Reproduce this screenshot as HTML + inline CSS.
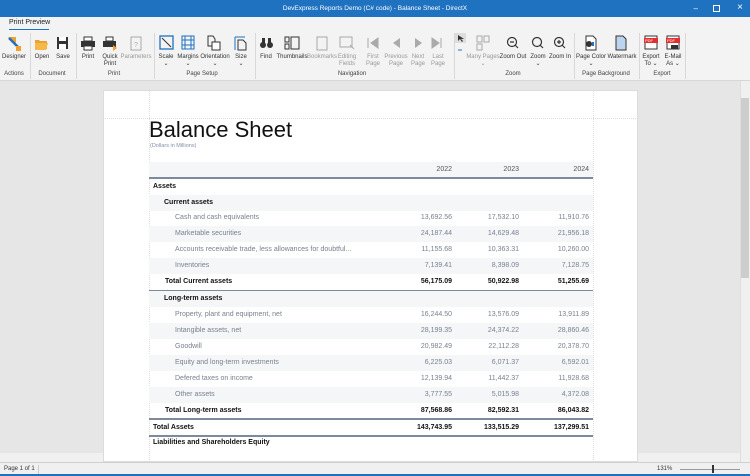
<!DOCTYPE html>
<html><head><meta charset="utf-8"><style>
*{margin:0;padding:0;box-sizing:border-box}
body{width:750px;height:476px;overflow:hidden;background:#e6e6e6;font-family:"Liberation Sans",Arial,sans-serif;position:relative}
.a{position:absolute}
#title{left:0;top:0;width:750px;height:17px;background:#1e72c0;color:#fff;font-size:6.5px;text-align:center;line-height:17px}
#tabs{left:0;top:17px;width:750px;height:13px;background:#f3f3f3}
#rib{left:0;top:30px;width:750px;height:51px;background:#f3f3f3;border-bottom:1px solid #d6d6d6}
.lb{font-size:6px;color:#333;text-align:center;width:40px;line-height:7px}
.gl{font-size:6px;color:#444;text-align:center;width:80px}
.sep{width:1px;height:46px;top:33px;background:#d8d8d8}
.dis{color:#999}
#page{left:103px;top:90px;width:535px;height:372px;background:#fff;border:1px solid #dcdcdc}
.row{position:absolute;left:149px;width:444px;height:16px;font-size:7px;line-height:16px;color:#7a8090}
.row.g{background:#f5f6f8}
.row span{position:absolute}
.n1{right:141px;text-align:right}.n2{right:74px}.n3{right:4px}
.b{color:#111;font-weight:bold}
.h{color:#555}
.ln{position:absolute;left:149px;width:444px;height:2px;background:#7d8a9c}
#status{left:0;top:462px;width:750px;height:14px;background:#f0f0f0;border-top:1px solid #d0d0d0;font-size:6px;color:#333;line-height:13px;border-bottom:2px solid #1e72c0}
</style></head><body>
<div class="a" id="title">DevExpress Reports Demo (C# code) - Balance Sheet - DirectX</div>
<div class="a" style="right:52px;top:4px;color:#fff;font-size:8px">&#8211;</div>
<div class="a" style="right:30px;top:5px;width:7px;height:7px;border:1px solid #fff"></div>
<div class="a" style="right:7px;top:2px;color:#fff;font-size:10px">&#215;</div>
<div class="a" id="tabs"><div class="a" style="left:9px;top:2px;font-size:7px;color:#222">Print Preview</div><div class="a" style="left:9px;top:12px;width:40px;height:1px;background:#1e72c0"></div></div>
<div class="a" id="rib"></div>
<svg class="a" style="left:0;top:33px" width="750" height="22" viewBox="0 33 750 22">
<path d="M8 37h8v8z" fill="#f0a030"/><path d="M9 38l10 10" stroke="#1e72c0" stroke-width="2.5"/><path d="M16 46h5v5h-5z" fill="#f0a030"/>
<path d="M35 40h4l1 1h7v8H35z" fill="#f0a030"/><path d="M35 43h13l-2 7H35z" fill="#f7b84a"/>
<rect x="57" y="37" width="11" height="12" fill="#333"/><rect x="59" y="37" width="7" height="4" fill="#fff"/><rect x="59" y="44" width="7" height="5" fill="#fff"/>
<rect x="81" y="41" width="14" height="6" fill="#333"/><rect x="84" y="37" width="8" height="4" fill="#fff" stroke="#333"/><rect x="84" y="46" width="8" height="4" fill="#fff" stroke="#333"/>
<rect x="103" y="41" width="13" height="6" fill="#333"/><rect x="106" y="37" width="7" height="4" fill="#fff" stroke="#333"/><path d="M113 45l4 3-4 3z" fill="#f0a030"/>
<rect x="131" y="37" width="10" height="13" fill="none" stroke="#aaa"/><text x="134" y="47" font-size="7" fill="#aaa" font-family="Liberation Sans">?</text>
<rect x="160" y="36" width="13" height="13" fill="none" stroke="#1e72c0" stroke-width="1.3"/><path d="M162 38l9 9" stroke="#333"/>
<rect x="182" y="36" width="12" height="13" fill="none" stroke="#1e72c0"/><path d="M185 36v13M191 36v13M182 40h12M182 45h12" stroke="#1e72c0"/>
<path d="M208 36h5l2 3v7h-7z" fill="none" stroke="#333"/><path d="M212 42h8v8h-8z" fill="#fff" stroke="#333"/>
<path d="M235 37h10M235 37v13" stroke="#1e72c0"/><path d="M238 40h5l3 3v7h-8z" fill="none" stroke="#333"/>
<circle cx="263" cy="45" r="3" fill="#333"/><circle cx="270" cy="45" r="3" fill="#333"/><rect x="262" y="38" width="3" height="6" fill="#333"/><rect x="268" y="38" width="3" height="6" fill="#333"/>
<rect x="285" y="37" width="4" height="5" fill="none" stroke="#333"/><rect x="285" y="44" width="4" height="5" fill="none" stroke="#333"/><rect x="291" y="37" width="8" height="12" fill="none" stroke="#333"/>
<rect x="317" y="37" width="10" height="13" fill="none" stroke="#aaa"/><rect x="340" y="37" width="12" height="10" fill="none" stroke="#aaa"/><path d="M350 45l4 4" stroke="#aaa"/>
<path d="M368 38v10M378 38l-7 5 7 5z" fill="#aaa" stroke="#aaa"/><path d="M400 38l-7 5 7 5z" fill="#aaa"/><path d="M415 38l7 5-7 5z" fill="#aaa"/><path d="M432 38l7 5-7 5zM441 38v10" fill="#aaa" stroke="#aaa"/>
<rect x="455" y="33" width="11" height="10" fill="#ddd"/><path d="M458 35v6l2-2 2 3 1-1-2-2h3z" fill="#333"/>
<rect x="477" y="36" width="5" height="6" fill="none" stroke="#aaa"/><rect x="484" y="36" width="5" height="6" fill="none" stroke="#aaa"/><rect x="477" y="44" width="5" height="6" fill="none" stroke="#aaa"/>
<circle cx="512" cy="42" r="4.5" fill="none" stroke="#333" stroke-width="1.2"/><path d="M515 45l3 3M510 42h4" stroke="#333" stroke-width="1.2"/>
<circle cx="537" cy="42" r="4.5" fill="none" stroke="#333" stroke-width="1.2"/><path d="M540 45l3 3" stroke="#333" stroke-width="1.2"/>
<circle cx="559" cy="42" r="4.5" fill="none" stroke="#333" stroke-width="1.2"/><path d="M562 45l3 3M557 42h4M559 40v4" stroke="#333" stroke-width="1.2"/>
<path d="M586 36h7l3 3v11h-10z" fill="#fff" stroke="#333"/><circle cx="589" cy="44" r="3" fill="#333"/><path d="M593 42v4" stroke="#1e72c0" stroke-width="2"/>
<path d="M616 36h7l3 3v11h-10z" fill="#bcd4ee" stroke="#333"/>
<rect x="645" y="36" width="12" height="13" fill="#fff" stroke="#333"/><rect x="644" y="38" width="14" height="5" fill="#e03030"/><text x="645" y="42" font-size="4" fill="#fff" font-family="Liberation Sans">PDF</text>
<rect x="667" y="36" width="12" height="13" fill="#fff" stroke="#333"/><rect x="666" y="38" width="14" height="5" fill="#e03030"/><text x="667" y="42" font-size="4" fill="#fff" font-family="Liberation Sans">PDF</text><rect x="671" y="45" width="7" height="4" fill="#333"/>
<path d="M458 50h4" stroke="#1e72c0"/>
</svg>
<div class="a sep" style="left:30px"></div><div class="a sep" style="left:76px"></div><div class="a sep" style="left:154px"></div><div class="a sep" style="left:255px"></div><div class="a sep" style="left:454px"></div><div class="a sep" style="left:574px"></div><div class="a sep" style="left:639px"></div><div class="a sep" style="left:685px"></div>
<div class="a lb" style="left:-6px;top:54px">Designer</div>
<div class="a lb" style="left:22px;top:54px">Open</div>
<div class="a lb" style="left:43px;top:54px">Save</div>
<div class="a lb" style="left:68px;top:54px">Print</div>
<div class="a lb" style="left:90px;top:54px">Quick<br>Print</div>
<div class="a lb dis" style="left:116px;top:54px">Parameters</div>
<div class="a lb" style="left:146px;top:54px">Scale<br>⌄</div>
<div class="a lb" style="left:168px;top:54px">Margins<br>⌄</div>
<div class="a lb" style="left:195px;top:54px">Orientation<br>⌄</div>
<div class="a lb" style="left:221px;top:54px">Size<br>⌄</div>
<div class="a lb" style="left:246px;top:54px">Find</div>
<div class="a lb" style="left:272px;top:54px">Thumbnails</div>
<div class="a lb dis" style="left:302px;top:54px">Bookmarks</div>
<div class="a lb dis" style="left:327px;top:54px">Editing<br>Fields</div>
<div class="a lb dis" style="left:353px;top:54px">First<br>Page</div>
<div class="a lb dis" style="left:376px;top:54px">Previous<br>Page</div>
<div class="a lb dis" style="left:398px;top:54px">Next<br>Page</div>
<div class="a lb dis" style="left:418px;top:54px">Last<br>Page</div>
<div class="a lb dis" style="left:463px;top:54px">Many Pages<br>⌄</div>
<div class="a lb" style="left:493px;top:54px">Zoom Out</div>
<div class="a lb" style="left:518px;top:54px">Zoom<br>⌄</div>
<div class="a lb" style="left:540px;top:54px">Zoom In</div>
<div class="a lb" style="left:571px;top:54px">Page Color<br>⌄</div>
<div class="a lb" style="left:602px;top:54px">Watermark</div>
<div class="a lb" style="left:631px;top:54px">Export<br>To ⌄</div>
<div class="a lb" style="left:653px;top:54px">E-Mail<br>As ⌄</div>
<div class="a gl" style="left:-26px;top:71px">Actions</div>
<div class="a gl" style="left:12px;top:71px">Document</div>
<div class="a gl" style="left:74px;top:71px">Print</div>
<div class="a gl" style="left:162px;top:71px">Page Setup</div>
<div class="a gl" style="left:312px;top:71px">Navigation</div>
<div class="a gl" style="left:473px;top:71px">Zoom</div>
<div class="a gl" style="left:566px;top:71px">Page Background</div>
<div class="a gl" style="left:622px;top:71px">Export</div>
<div class="a" style="left:740px;top:81px;width:10px;height:381px;background:#f0f0f0;border-left:1px solid #ddd"></div>
<div class="a" style="left:741px;top:98px;width:8px;height:180px;background:#cdcdcd"></div>
<div class="a" style="left:0;top:453px;width:740px;height:9px;background:#f0f0f0"></div>
<div class="a" id="page"></div>
<div class="a" style="left:103px;top:118px;width:535px;border-top:1px dotted #ddd"></div>
<div class="a" style="left:149px;top:90px;height:372px;border-left:1px dotted #ddd"></div>
<div class="a" style="left:593px;top:90px;height:372px;border-left:1px dotted #ddd"></div>
<div class="a" style="left:149px;top:117px;font-size:22px;color:#111">Balance Sheet</div>
<div class="a" style="left:150px;top:143px;font-size:5.5px;color:#8090a8">(Dollars in Millions)</div>
<div class="row g h" style="top:162px"><span class="n1">2022</span><span class="n2">2023</span><span class="n3">2024</span></div>
<div class="ln" style="top:177px"></div>
<div class="row b" style="top:179px"><span style="left:4px">Assets</span></div>
<div class="row g b" style="top:195px"><span style="left:15px">Current assets</span></div>
<div class="row" style="top:210px"><span style="left:26px">Cash and cash equivalents</span><span class="n1">13,692.56</span><span class="n2">17,532.10</span><span class="n3">11,910.76</span></div>
<div class="row g" style="top:226px"><span style="left:26px">Marketable securities</span><span class="n1">24,187.44</span><span class="n2">14,629.48</span><span class="n3">21,956.18</span></div>
<div class="row" style="top:242px"><span style="left:26px">Accounts receivable trade, less allowances for doubtful...</span><span class="n1">11,155.68</span><span class="n2">10,363.31</span><span class="n3">10,260.00</span></div>
<div class="row g" style="top:258px"><span style="left:26px">Inventories</span><span class="n1">7,139.41</span><span class="n2">8,398.09</span><span class="n3">7,128.75</span></div>
<div class="row b" style="top:274px"><span style="left:16px">Total Current assets</span><span class="n1">56,175.09</span><span class="n2">50,922.98</span><span class="n3">51,255.69</span></div>
<div class="ln" style="top:290px;height:1.5px"></div>
<div class="row g b" style="top:291px"><span style="left:15px">Long-term assets</span></div>
<div class="row" style="top:307px"><span style="left:26px">Property, plant and equipment, net</span><span class="n1">16,244.50</span><span class="n2">13,576.09</span><span class="n3">13,911.89</span></div>
<div class="row g" style="top:323px"><span style="left:26px">Intangible assets, net</span><span class="n1">28,199.35</span><span class="n2">24,374.22</span><span class="n3">28,860.46</span></div>
<div class="row" style="top:339px"><span style="left:26px">Goodwill</span><span class="n1">20,982.49</span><span class="n2">22,112.28</span><span class="n3">20,378.70</span></div>
<div class="row g" style="top:355px"><span style="left:26px">Equity and long-term investments</span><span class="n1">6,225.03</span><span class="n2">6,071.37</span><span class="n3">6,592.01</span></div>
<div class="row" style="top:371px"><span style="left:26px">Defered taxes on income</span><span class="n1">12,139.94</span><span class="n2">11,442.37</span><span class="n3">11,928.68</span></div>
<div class="row g" style="top:387px"><span style="left:26px">Other assets</span><span class="n1">3,777.55</span><span class="n2">5,015.98</span><span class="n3">4,372.08</span></div>
<div class="row b" style="top:403px"><span style="left:16px">Total Long-term assets</span><span class="n1">87,568.86</span><span class="n2">82,592.31</span><span class="n3">86,043.82</span></div>
<div class="ln" style="top:418px"></div>
<div class="row b" style="top:420px"><span style="left:4px">Total Assets</span><span class="n1">143,743.95</span><span class="n2">133,515.29</span><span class="n3">137,299.51</span></div>
<div class="ln" style="top:435px"></div>
<div class="row b" style="top:435px"><span style="left:4px">Liabilities and Shareholders Equity</span></div>
<div class="a" id="status"><span style="position:absolute;left:4px">Page 1 of 1</span><span style="position:absolute;left:38px;top:2px;width:1px;height:9px;background:#ccc"></span><span style="position:absolute;left:657px">131%</span><span style="position:absolute;left:680px;top:6px;width:60px;height:1px;background:#999"></span><span style="position:absolute;left:712px;top:2px;width:2px;height:8px;background:#333"></span></div>
</body></html>
